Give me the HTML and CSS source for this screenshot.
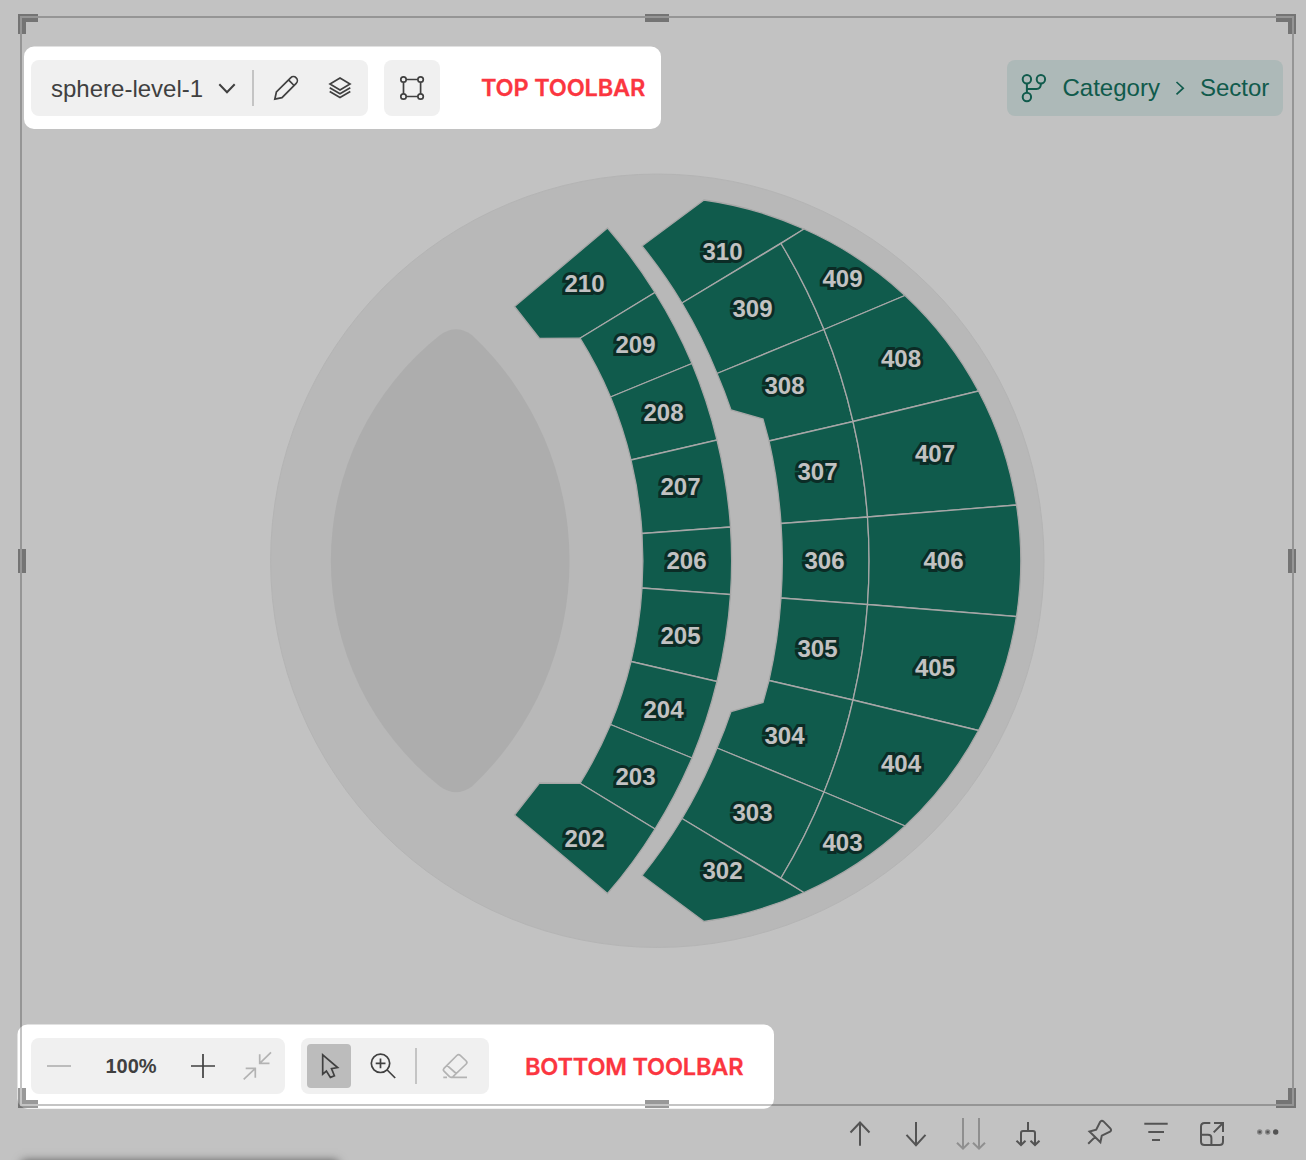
FILE: index.html
```html
<!DOCTYPE html>
<html lang="en">
<head>
<meta charset="utf-8">
<title>sphere-level-1</title>
<link rel="stylesheet" href="styles.css">
</head>
<body>
<main class="page">
  <section class="visual">
    <header class="bar bar-top">
      <div class="group">
        <span class="level-name">sphere-level-1</span>
        <svg class="chevron" viewBox="0 0 24 24"><path d="M4.3 8.2 12 16.200l7.700-8"/></svg>
        <i class="divider"></i>
        <button class="cell"><svg class="icon" viewBox="0 0 32 32"><path d="M4.800 27.200 6.400 20 20.600 5.800a3.900 3.900 0 0 1 5.600 5.600L12 25.600ZM18.500 7.900l5.600 5.600"/></svg></button>
        <button class="cell"><svg class="icon" viewBox="0 0 32 32"><path d="M16 6 26 12 16 18 6 12ZM5.700 15.700 16 21.800 26.300 15.700M5.700 19.400 16 25.500 26.300 19.400"/></svg></button>
      </div>
      <div class="group group-single">
        <button class="cell"><svg class="icon" viewBox="0 0 32 32"><path d="M10.200 7.500H22M10.200 24.500H22M7.500 10.200V21.800M24.600 10.200V21.800"/><circle cx="7.500" cy="7.500" r="2.700"/><circle cx="24.600" cy="7.500" r="2.700"/><circle cx="7.500" cy="24.500" r="2.700"/><circle cx="24.600" cy="24.500" r="2.700"/></svg></button>
      </div>
      <strong class="note note-top">TOP TOOLBAR</strong>
      <nav class="crumbs">
        <svg class="icon" viewBox="0 0 32 32"><circle cx="8.900" cy="7.300" r="4.200"/><circle cx="22.900" cy="7.300" r="4.200"/><circle cx="8.900" cy="25" r="4.200"/><path d="M8.900 11.500V20.800M22.900 11.500C22.900 15 21.500 17 18.500 17H8.900"/></svg>
        <span class="crumb">Category</span>
        <svg class="crumb-sep" viewBox="0 0 16 16"><path d="M4.500 2 11.200 8.200 4.500 14.400"/></svg>
        <span>Sector</span>
      </nav>
    </header>

    <svg class="map" viewBox="22 116 1270 922">
      <circle class="arena" cx="657.300" cy="560.750" r="386.700"/>
      <path class="stage" d="M440 335Q456 323.500 472 335A310 310 0 0 1 472 786.500Q456 798 440 786.500A288 288 0 0 1 440 335Z"/>
      <g class="sectors">
        <path d="M514.500 306.500 607.500 228A508.500 508.500 0 0 1 655 292.500L580 338.200 539.500 338.500Z"/>
        <path d="M580 338.200 655 292.500A508.500 508.500 0 0 1 692 363.500L610.500 397A425 425 0 0 0 580 338.200Z"/>
        <path d="M610.500 397 692 363.500A508.500 508.500 0 0 1 717 440L631 460A425 425 0 0 0 610.500 397Z"/>
        <path d="M631 460 717 440A508.500 508.500 0 0 1 730.500 527L642 533.500A425 425 0 0 0 631 460Z"/>
        <path d="M642 533.500 730.500 527A508.500 508.500 0 0 1 730.500 594.500L642 588A425 425 0 0 0 642 533.500Z"/>
        <path d="M642 588 730.500 594.500A508.500 508.500 0 0 1 717 681.500L631 661.500A425 425 0 0 0 642 588Z"/>
        <path d="M631 661.500 717 681.500A508.500 508.500 0 0 1 692 758L610.500 724.500A425 425 0 0 0 631 661.500Z"/>
        <path d="M610.500 724.500 692 758A508.500 508.500 0 0 1 655 829L580 783.300A425 425 0 0 0 610.500 724.500Z"/>
        <path d="M580 783.300 655 829A508.500 508.500 0 0 1 607.500 893.500L514.500 815 539.500 783Z"/>

        <path d="M642 246 704 200A363.500 363.500 0 0 1 804 229L682 303A500 500 0 0 0 642 246Z"/>
        <path d="M682 303 781 243.500A608 608 0 0 1 824 329.500L717 373.500A500 500 0 0 0 682 303Z"/>
        <path d="M717 373.500 824 329.500A608 608 0 0 1 853 421.500L769 441 763 419 731 410A500 500 0 0 0 717 373.500Z"/>
        <path d="M769 441 853 421.500A608 608 0 0 1 867.500 517L781 523.500A530 530 0 0 0 769 441Z"/>
        <path d="M781 523.500 867.500 517A608 608 0 0 1 867.500 604.500L781 598A530 530 0 0 0 781 523.500Z"/>
        <path d="M781 598 867.500 604.500A608 608 0 0 1 853 700L769 680.500A530 530 0 0 0 781 598Z"/>
        <path d="M769 680.500 853 700A608 608 0 0 1 824 792L717 748A500 500 0 0 0 731 711.500L763 702.500Z"/>
        <path d="M717 748 824 792A608 608 0 0 1 781 878L682 818.500A500 500 0 0 0 717 748Z"/>
        <path d="M682 818.500 804 892.500A363.500 363.500 0 0 1 704 921.500L642 875.500A500 500 0 0 0 682 818.500Z"/>

        <path d="M781 243.500 804 229A363.500 363.500 0 0 1 905 295.500L824 329.500A608 608 0 0 0 781 243.500Z"/>
        <path d="M824 329.500 905 295.500A363.500 363.500 0 0 1 978.500 391L853 421.500A608 608 0 0 0 824 329.500Z"/>
        <path d="M853 421.500 978.500 391A363.500 363.500 0 0 1 1016.500 505L867.500 517A608 608 0 0 0 853 421.500Z"/>
        <path d="M867.500 517 1016.500 505A363.500 363.500 0 0 1 1016.500 616.500L867.500 604.500A608 608 0 0 0 867.500 517Z"/>
        <path d="M867.500 604.500 1016.500 616.500A363.500 363.500 0 0 1 978.500 730.500L853 700A608 608 0 0 0 867.500 604.500Z"/>
        <path d="M853 700 978.500 730.500A363.500 363.500 0 0 1 905 826L824 792A608 608 0 0 0 853 700Z"/>
        <path d="M824 792 905 826A363.500 363.500 0 0 1 804 892.500L781 878A608 608 0 0 0 824 792Z"/>
      </g>
      <g class="sector-labels">
        <text x="584.500" y="292">210</text><text x="635.500" y="353">209</text><text x="663.500" y="421">208</text><text x="680.500" y="495">207</text><text x="686.500" y="569">206</text><text x="680.500" y="644">205</text><text x="663.500" y="718">204</text><text x="635.500" y="785">203</text><text x="584.500" y="847">202</text>
        <text x="722.500" y="260">310</text><text x="752.500" y="317">309</text><text x="784.500" y="394">308</text><text x="817.500" y="480">307</text><text x="824.500" y="569">306</text><text x="817.500" y="657">305</text><text x="784.500" y="744">304</text><text x="752.500" y="821">303</text><text x="722.500" y="879">302</text>
        <text x="842.500" y="287">409</text><text x="901" y="367">408</text><text x="935" y="462">407</text><text x="943.500" y="569">406</text><text x="935" y="676">405</text><text x="901" y="772">404</text><text x="842.500" y="851">403</text>
      </g>
    </svg>

    <footer class="bar bar-bottom">
      <div class="group group-zoom">
        <button class="cell off"><svg class="icon" viewBox="0 0 32 32"><path d="M4 16H28"/></svg></button>
        <span class="zoom-value">100%</span>
        <button class="cell"><svg class="icon" viewBox="0 0 32 32"><path d="M4 16H28M16 4V28"/></svg></button>
        <button class="cell off"><svg class="icon" viewBox="0 0 32 32"><path d="M30 2.300 18.700 13.300M18.700 4.300V13.300H28.500M2.700 29.300 14.300 18.300M4.700 18.300H14.300V27.700"/></svg></button>
      </div>
      <div class="group group-tools">
        <button class="cell active"><svg class="icon" viewBox="0 0 32 32"><path d="M9.700 4.900V24.200L13.400 21 17.400 27.400 21.400 25.700 18.500 18.600 24.600 17.500Z"/></svg></button>
        <button class="cell"><svg class="icon" viewBox="0 0 32 32"><circle cx="13.500" cy="13.300" r="9.200"/><path d="M20.200 20 28.200 28M8.700 13.300H18.500M13.500 8.500V18.200"/></svg></button>
        <i class="divider"></i>
        <button class="cell off"><svg class="icon" viewBox="0 0 32 32"><path d="M4.300 27.300H8M12 27.300H28M10.500 26.600 5 21.200Q3.700 19.800 5 18.300L17.800 5.500Q19.500 3.900 21.300 5.400L27.200 11Q28.600 12.500 27.200 14L14 26.600Q12.300 28 10.500 26.600M8 15.300 17.200 23.500"/></svg></button>
      </div>
      <strong class="note note-bottom">BOTTOM TOOLBAR</strong>
    </footer>

    <i class="corner nw"></i><i class="corner ne"></i><i class="corner sw"></i><i class="corner se"></i>
    <i class="handle n"></i><i class="handle s"></i><i class="handle w"></i><i class="handle e"></i>
    <i class="outline"></i>
  </section>

  <div class="actions">
    <svg class="icon" viewBox="0 0 32 32"><path d="M16 28.700V5.500M6.500 15.500 16 5.500 25.500 15.500"/></svg>
    <svg class="icon" viewBox="0 0 32 32"><path d="M16 5V28.200M6.500 17.800 16 28.200 25.500 17.800"/></svg>
    <svg class="icon off" viewBox="0 0 32 32"><path d="M7 1V31.500M1 25.800 7 31.700 13 25.800M23 1V31.500M17 25.800 23 31.700 29 25.800"/></svg>
    <svg class="icon split" viewBox="0 0 32 32"><path d="M16 5V14M9 28V16Q9 14 11 14H21Q23 14 23 16V28M4.500 23.700 9 28 13.500 23.700M18.500 23.700 23 28 27.500 23.700"/></svg>
    <svg class="icon" viewBox="0 0 32 32"><path d="M4.200 26.800 11.200 19.900M5.500 14.500 16.400 25.200 17.800 18.600 26 14.700Q28 13.300 26.300 11.400L19.500 4.400Q17.700 2.800 16.200 4.800L12.200 12.600 5.500 14.500Z"/></svg>
    <svg class="icon" viewBox="0 0 32 32"><path d="M4.300 6.800H27.700M8.300 15H24M12 23H20"/></svg>
    <svg class="icon" viewBox="0 0 32 32"><path d="M14.300 6H8.500Q5 6 5 9.500V24.500Q5 28 8.500 28H23.500Q27 28 27 24.500V19M5 17.800H12Q15.400 17.800 15.400 21V28M18 6H27V15M27 6 17.700 15.400"/></svg>
    <svg class="icon dots" viewBox="0 0 32 32"><circle class="soft" cx="7.700" cy="15" r="2.700"/><circle cx="7.700" cy="15" r="1.300"/><circle class="soft" cx="15.700" cy="15" r="2.700"/><circle cx="15.700" cy="15" r="1.300"/><circle cx="23.700" cy="15" r="2.700"/></svg>
  </div>
  <i class="next-card"></i>
  <svg class="shade" viewBox="0 0 1306 1160"><path fill-rule="evenodd" d="M0 0H1306V1160H0ZM34 46.500H651A10 10 0 0 1 661 56.500V119A10 10 0 0 1 651 129H34A10 10 0 0 1 24 119V56.500A10 10 0 0 1 34 46.500ZM27.500 1024.500H764A10 10 0 0 1 774 1034.500V1098.700A10 10 0 0 1 764 1108.700H27.500A10 10 0 0 1 17.500 1098.700V1034.500A10 10 0 0 1 27.500 1024.500Z"/></svg>
</main>
</body>
</html>
```
FILE: styles.css
```css
* { box-sizing: border-box; }

body {
  margin: 0;
  background: #fff;
  color: #404040;
  font-family: "Liberation Sans", Arial, sans-serif;
}

.page {
  position: relative;
  display: flex;
  flex-direction: column;
  width: 1306px;
  height: 1160px;
  padding: 16px 12px 0 20px;
  overflow: hidden;
}

.visual {
  position: relative;
  display: flex;
  flex-direction: column;
  width: 1274px;
  height: 1090px;
  padding: 44px 11px 12px;
}

.bar { display: flex; align-items: center; height: 56px; flex: none; }

.group {
  display: flex;
  align-items: center;
  height: 56px;
  border-radius: 8px;
  background: #f0f0f0;
  width: 337px;
  padding-left: 20px;
}

.group-single { width: 56px; margin-left: 16px; padding: 0 1px; }
.group-zoom { width: 254px; padding: 0 1px; }
.group-tools { width: 188px; margin-left: 16px; padding: 0 6px; }

.cell {
  display: flex;
  align-items: center;
  justify-content: center;
  width: 54px;
  height: 44px;
  padding: 0;
  border: 0;
  border-radius: 4px;
  background: none;
  color: #404040;
  flex: none;
}

.group-tools .cell { width: 44px; }
.group-tools .cell + .cell { margin-left: 10px; }
.group-tools .divider { margin: 0 16px 0 10px; }
.cell.active { background: #bcbcbc; }
.cell.off { color: #b3b3b3; }

.icon {
  display: block;
  width: 32px;
  height: 32px;
  flex: none;
  overflow: visible;
  fill: none;
  stroke: currentColor;
  stroke-width: 1.7;
}

.level-name { width: 152px; padding-top: 2px; font-size: 24px; line-height: 56px; white-space: nowrap; }

.chevron {
  width: 24px;
  height: 24px;
  margin-left: 12px;
  fill: none;
  stroke: #404040;
  stroke-width: 2;
}

.divider { width: 2px; height: 36px; margin: 0 5px 0 13px; background: #c4c4c4; flex: none; }

.zoom-value { width: 90px; font-size: 20px; font-weight: 700; text-align: center; }

.note {
  color: #fb3640;
  font-family: Inter, sans-serif;
  font-size: 23.500px;
  font-weight: 600;
  letter-spacing: -0.180px;
  line-height: 32px;
  white-space: nowrap;
  -webkit-text-stroke: 0.300px #fb3640;
}

.note-top { margin-left: 41px; }
.note-bottom { margin-left: 36px; padding-top: 2px; }

.crumbs {
  display: flex;
  align-items: center;
  width: 276px;
  height: 56px;
  margin-left: auto;
  padding-left: 11px;
  border-radius: 8px;
  background: #e4f3f2;
  color: #167865;
  font-size: 24px;
}

.crumbs .icon { margin-left: -0.500px; stroke-width: 2; }
.crumb { width: 98px; margin-left: 13px; }
.crumb-sep { width: 16px; height: 16px; margin: 0 12px 0 11.500px; fill: none; stroke: currentColor; stroke-width: 1.700; }

.map { display: block; width: 1270px; height: 922px; margin-left: -9px; flex: none; }
.arena { fill: #f2f2f2; stroke: #ededed; }
.stage { fill: #e4e4e4; }
.sectors path { fill: #167865; stroke: #dcdcdc; stroke-width: 1.300; }

.sector-labels {
  fill: #fff;
  stroke: #0f3b32;
  stroke-width: 6;
  stroke-miterlimit: 4;
  paint-order: stroke;
  font-size: 24px;
  font-weight: 700;
  text-anchor: middle;
}

.outline { position: absolute; inset: 0; border: 2px solid #c4c4c4; pointer-events: none; }

.corner { position: absolute; width: 20px; height: 20px; border: 0 solid #999; }
.nw { top: -2px; left: -2px; border-width: 8px 0 0 8px; }
.ne { top: -2px; right: -2px; border-width: 8px 8px 0 0; }
.sw { bottom: -2px; left: -2px; border-width: 0 0 8px 8px; }
.se { bottom: -2px; right: -2px; border-width: 0 8px 8px 0; }

.handle { position: absolute; width: 24px; height: 8px; background: #999; }
.n { top: -2px; left: 625px; }
.s { bottom: -2px; left: 625px; }
.w, .e { top: 533px; width: 8px; height: 24px; }
.w { left: -2px; }
.e { right: -2px; }

.actions {
  display: flex;
  justify-content: flex-end;
  gap: 24px;
  padding: 11px 10px 0 0;
  color: #6f6f6f;
}

.actions .icon { stroke-width: 2; }
.actions .off { color: #bcbcbc; }
.actions .split { margin-right: 16px; }
.actions .dots { fill: currentColor; stroke: none; }
.actions .dots .soft { fill: #b0b0b0; }

.next-card {
  position: absolute;
  top: 1161px;
  left: 22px;
  width: 316px;
  height: 40px;
  background: #fff;
  box-shadow: 0 0 9px rgba(0, 0, 0, 0.600);
}

.shade { position: absolute; inset: 0; width: 1306px; height: 1160px; fill: #000; fill-opacity: 0.240; pointer-events: none; }
```
